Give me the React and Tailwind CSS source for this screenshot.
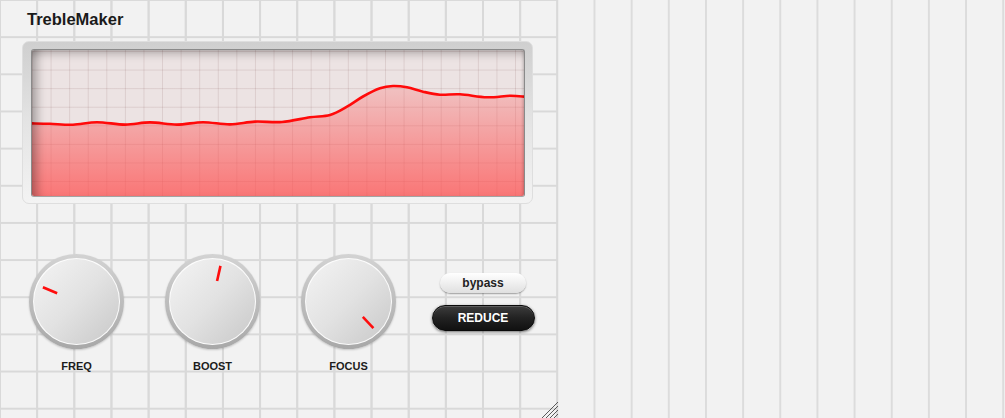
import React from 'react';

// curve samples, in page coordinates of the screen (x 31..525, y 49..197)
const curve = [
    [31, 123.4], [50, 123.8], [73, 124.7], [97, 122.2], [125, 124.6], [150, 122.4],
    [177, 124.6], [203, 122.2], [230, 124.4], [255, 121.6], [282, 122], [310, 117.3],
    [330, 115], [347, 106.7], [363, 96.5], [380, 88.3], [393, 86], [407, 87.3],
    [423, 91.7], [440, 94.7], [460, 94.3], [487, 97.3], [510, 95.7], [525, 96.7],
];

const smooth = (pts) => {
    let d = `M${pts[0][0]},${pts[0][1]}`;
    for (let i = 0; i < pts.length - 1; i++) {
        const p0 = pts[i - 1] || pts[i];
        const p1 = pts[i];
        const p2 = pts[i + 1];
        const p3 = pts[i + 2] || p2;
        const c1x = p1[0] + (p2[0] - p0[0]) / 6;
        const c1y = p1[1] + (p2[1] - p0[1]) / 6;
        const c2x = p2[0] - (p3[0] - p1[0]) / 6;
        const c2y = p2[1] - (p3[1] - p1[1]) / 6;
        d += ` C${c1x.toFixed(2)},${c1y.toFixed(2)} ${c2x.toFixed(2)},${c2y.toFixed(2)} ${p2[0]},${p2[1]}`;
    }
    return d;
};

const Knob = ({ label, angle, className }) => (
    <div className={`flex flex-col items-center ${className}`}>
        <div className="relative w-[95px] h-[95px] rounded-full bg-gradient-to-b from-[#d3d3d3] to-[#a8a8a8] p-[4px] shadow-[0_1px_2px_rgba(0,0,0,0.18)]">
            <div className="w-full h-full rounded-full border border-white/90 bg-gradient-to-br from-[#f4f4f4] via-[#e2e2e2] to-[#c8c8c8]" />
            <svg className="absolute inset-0" width="95" height="95" viewBox="0 0 95 95">
                <line
                    x1="47.5" y1="26.5" x2="47.5" y2="11"
                    stroke="#ff0d0d" strokeWidth="2.6"
                    transform={`rotate(${angle} 47.5 47.5)`}
                />
            </svg>
        </div>
        <div className="mt-[12px] h-[11px] leading-none text-[11px] font-bold text-[#1c1c1c]">{label}</div>
    </div>
);

const Screen = () => {
    const line = smooth(curve);
    const fill = `${line} L525,197 L31,197 Z`;
    return (
        <div className="relative w-[494px] h-[148px] rounded-[3px] border border-[#8a8a8a] border-b-[#a3a3a3] bg-[#ece3e3] overflow-hidden bg-[linear-gradient(to_right,rgba(110,60,60,0.13)_1px,transparent_1px),linear-gradient(to_bottom,rgba(110,60,60,0.13)_1px,transparent_1px)] bg-[size:18.58px_18.58px] bg-[position:0px_1px]">
            <svg className="block" width="492" height="146" viewBox="32 50 492 146">
                <defs>
                    <linearGradient id="fillGrad" x1="0" y1="49" x2="0" y2="197" gradientUnits="userSpaceOnUse">
                        <stop offset="0" stopColor="#ff4f4f" stopOpacity="0.05" />
                        <stop offset="1" stopColor="#ff4f4f" stopOpacity="0.74" />
                    </linearGradient>
                </defs>
                <path d={fill} fill="url(#fillGrad)" />
                <path d={line} fill="none" stroke="#ff0a0a" strokeWidth="2.6" strokeLinecap="round" />
            </svg>
            <div className="absolute inset-0 rounded-[2px] pointer-events-none shadow-[inset_11px_0_10px_-6px_rgba(0,0,0,0.3),inset_0_10px_9px_-6px_rgba(0,0,0,0.24),inset_-3px_0_3px_-2px_rgba(0,0,0,0.2)]" />
        </div>
    );
};

export default function App() {
    return (
        <div className="w-[1005px] h-[418px] overflow-hidden flex bg-[#f2f2f2] bg-[linear-gradient(to_right,#dcdcdc_1.6px,transparent_1.6px)] bg-[size:37.17px_37.17px] bg-[position:-1px_0px] font-['Liberation_Sans',Arial,sans-serif]">
            <div className="relative w-[558px] h-full bg-[linear-gradient(to_right,#d9d9d9_1.6px,transparent_1.6px),linear-gradient(to_bottom,#d9d9d9_1.6px,transparent_1.6px)] bg-[size:37.17px_37.17px] bg-[position:-1px_-1px]">
                <div className="mt-[10.5px] ml-[27px] h-[16.5px] leading-none text-[16.5px] font-bold text-[#1a1a1a]">TrebleMaker</div>

                <div className="mt-[14px] ml-[22px] w-[511px] h-[163px] rounded-[7px] border border-[#dedede] bg-gradient-to-b from-[#cfcfcf] via-[#e4e4e4] to-[#f3f3f3] pl-[8px] pt-[7px]">
                    <Screen />
                </div>

                <div className="mt-[50px] flex items-start">
                    <Knob label="FREQ" angle={-67} className="ml-[29px]" />
                    <Knob label="BOOST" angle={12.6} className="ml-[41px]" />
                    <Knob label="FOCUS" angle={137} className="ml-[41px]" />
                    <div className="ml-[27px] w-[120px] mt-[19px] flex flex-col items-center gap-[12px]">
                        <button className="w-[86px] h-[20px] rounded-full bg-gradient-to-b from-[#ffffff] to-[#e0e0e0] shadow-[0_1px_1.5px_rgba(0,0,0,0.35)] text-[12px] font-bold text-[#222] leading-none flex items-center justify-center">
                            bypass
                        </button>
                        <button className="w-[103px] h-[26px] rounded-full bg-gradient-to-b from-[#3d3d3d] via-[#222] to-[#111] border border-[#0a0a0a] shadow-[0_1px_3px_rgba(0,0,0,0.55),inset_0_1px_0_rgba(255,255,255,0.18)] text-[12px] font-bold text-white leading-none flex items-center justify-center">
                            REDUCE
                        </button>
                    </div>
                </div>

                <svg className="absolute right-0 bottom-0" width="17" height="17" viewBox="0 0 17 17">
                    <g stroke="#5a5a5a" strokeWidth="1">
                        <line x1="17" y1="1" x2="1" y2="17" />
                        <line x1="17" y1="5" x2="5" y2="17" />
                        <line x1="17" y1="9" x2="9" y2="17" />
                        <line x1="17" y1="13" x2="13" y2="17" />
                    </g>
                </svg>
            </div>
        </div>
    );
}
